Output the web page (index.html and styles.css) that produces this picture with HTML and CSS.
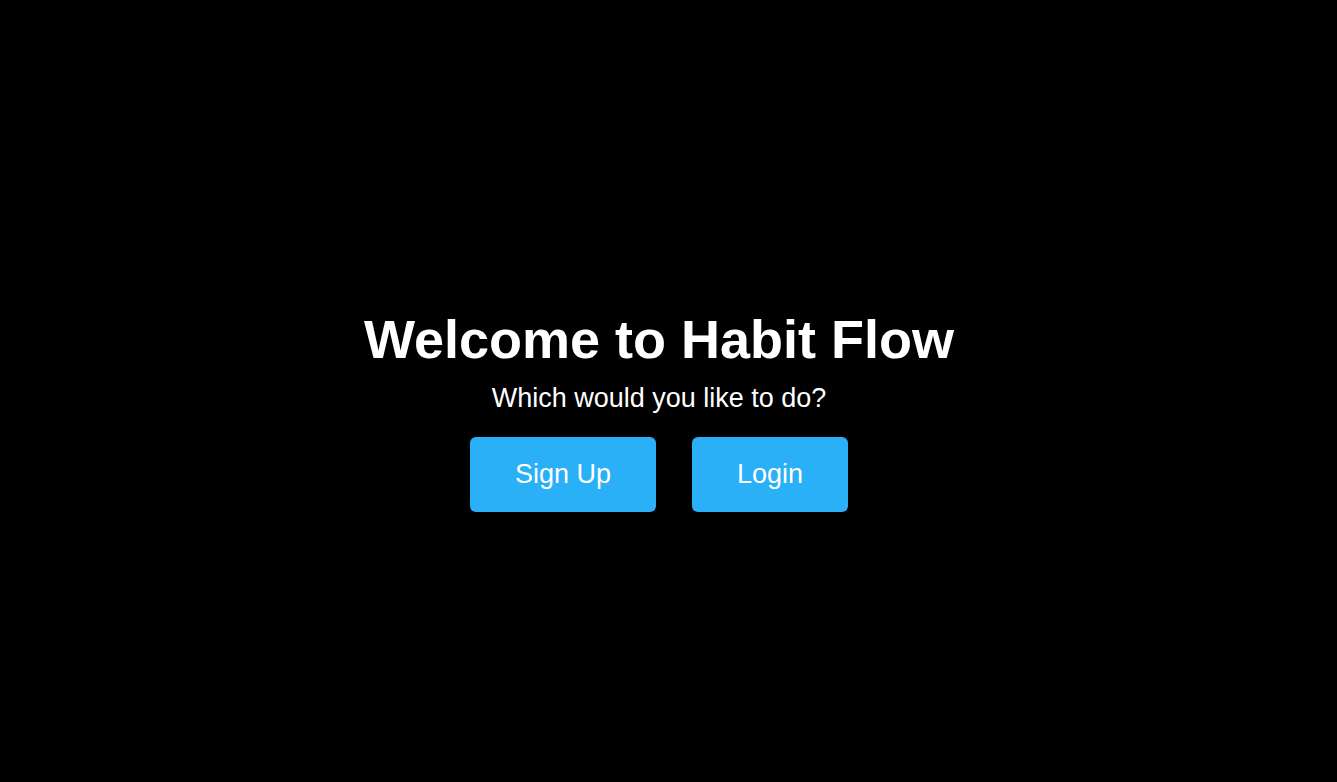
FILE: index.html
```html
<!DOCTYPE html>
<html lang="en">
<head>
<meta charset="utf-8">
<title>Habit Flow</title>
<link rel="stylesheet" href="styles.css">
</head>
<body>
<main class="welcome">
  <h1 class="title">Welcome to Habit Flow</h1>
  <p class="subtitle">Which would you like to do?</p>
  <div class="actions">
    <button class="btn">Sign Up</button>
    <button class="btn">Login</button>
  </div>
</main>
</body>
</html>
```
FILE: styles.css
```css
html, body {
  margin: 0;
  padding: 0;
  height: 100%;
  background: #000;
  color: #fff;
  font-family: "Liberation Sans", Arial, sans-serif;
}
.welcome {
  box-sizing: border-box;
  height: 100%;
  padding: 38px 19px 0 0;
  display: flex;
  flex-direction: column;
  align-items: center;
  justify-content: center;
}
.title {
  margin: 0;
  font-size: 54px;
  font-weight: bold;
}
.subtitle {
  margin: 13px 0 23px;
  font-size: 27px;
}
.actions {
  display: flex;
  gap: 36px;
}
.btn {
  background: #29b0f7;
  color: #fff;
  border: none;
  border-radius: 6px;
  font-family: inherit;
  font-size: 27px;
  padding: 0 45px;
  height: 75px;
}
```
